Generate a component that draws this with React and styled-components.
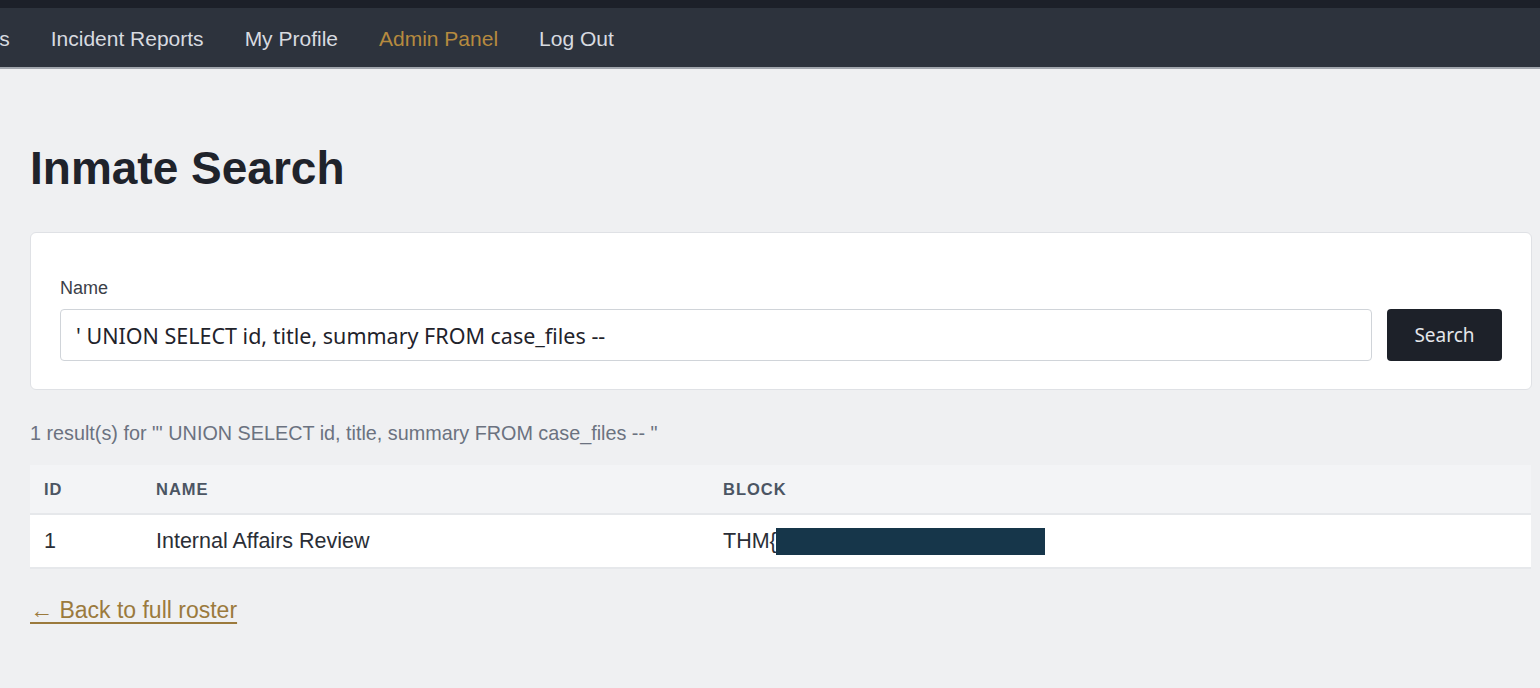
import React from 'react';
import styled, { createGlobalStyle } from 'styled-components';

const GlobalStyle = createGlobalStyle`
  html, body {
    margin: 0;
    padding: 0;
    background: #eff0f2;
    font-family: "Liberation Sans", Arial, sans-serif;
    overflow: hidden;
  }
`;

const navItems = [
  { label: 'Inmates' },
  { label: 'Incident Reports' },
  { label: 'My Profile' },
  { label: 'Admin Panel', active: true },
  { label: 'Log Out' },
];

const query = "' UNION SELECT id, title, summary FROM case_files --";

const App = () => {
  return (
    <>
      <GlobalStyle />
      <TopStrip />
      <NavBar>
        <NavList>
          {navItems.map((item) => (
            <NavLink key={item.label} $active={item.active}>{item.label}</NavLink>
          ))}
        </NavList>
      </NavBar>
      <Main>
        <Title>Inmate Search</Title>
        <SearchCard>
          <Label>Name</Label>
          <SearchRow>
            <SearchInput defaultValue={query} />
            <SearchButton>Search</SearchButton>
          </SearchRow>
        </SearchCard>
        <ResultCount>1 result(s) for "{query} "</ResultCount>
        <Table>
          <colgroup>
            <col style={{ width: '112px' }} />
            <col style={{ width: '567px' }} />
            <col />
          </colgroup>
          <thead>
            <tr>
              <Th>ID</Th>
              <Th>Name</Th>
              <Th>Block</Th>
            </tr>
          </thead>
          <tbody>
            <tr>
              <Td>1</Td>
              <Td>Internal Affairs Review</Td>
              <Td>THM{'{'}<Redacted /></Td>
            </tr>
          </tbody>
        </Table>
        <BackLink href="#">← Back to full roster</BackLink>
      </Main>
    </>
  );
};

const TopStrip = styled.div`
  height: 8px;
  background: #1c2029;
`;

const NavBar = styled.nav`
  height: 59px;
  background: #2d333d;
  border-bottom: 2px solid #a2a7ae;
  display: flex;
  align-items: center;
  overflow: hidden;
`;

const NavList = styled.div`
  display: flex;
  align-items: center;
  gap: 41px;
  margin-left: -65px;
  padding-top: 2px;
`;

const NavLink = styled.a`
  font-size: 21px;
  color: ${(p) => (p.$active ? '#b68a3f' : '#d8dbe0')};
  text-decoration: none;
  white-space: nowrap;
  cursor: pointer;
`;

const Main = styled.main`
  padding: 73px 8px 40px 30px;
`;

const Title = styled.h1`
  margin: 0 0 38px;
  font-size: 46px;
  font-weight: 700;
  color: #1f232b;
  line-height: 52px;
`;

const SearchCard = styled.div`
  background: #ffffff;
  border: 1px solid #dfe1e5;
  border-radius: 6px;
  padding: 45px 29px 28px;
`;

const Label = styled.label`
  display: block;
  font-size: 18px;
  color: #3b4048;
  margin-bottom: 11px;
  line-height: 20px;
`;

const SearchRow = styled.div`
  display: flex;
  gap: 15px;
  align-items: stretch;
`;

const SearchInput = styled.input`
  flex: 1;
  height: 52px;
  box-sizing: border-box;
  border: 1px solid #d0d4d9;
  border-radius: 4px;
  padding: 0 15px;
  font-family: "Noto Sans", "Open Sans", sans-serif;
  font-size: 21.5px;
  color: #1f232b;
  outline: none;
`;

const SearchButton = styled.button`
  width: 115px;
  height: 52px;
  background: #1d2129;
  color: #e4e6ea;
  border: none;
  border-radius: 4px;
  font-family: "Noto Sans", "Open Sans", sans-serif;
  font-size: 19px;
  cursor: pointer;
`;

const ResultCount = styled.p`
  margin: 31px 0 20px;
  font-size: 19.8px;
  color: #6b7280;
  line-height: 24px;
`;

const Table = styled.table`
  width: calc(100% - 1px);
  border-collapse: collapse;
  table-layout: fixed;
`;

const Th = styled.th`
  background: #f3f4f6;
  height: 48px;
  padding: 0 14px;
  text-align: left;
  font-size: 16.5px;
  font-weight: 700;
  text-transform: uppercase;
  letter-spacing: 1px;
  color: #4b5563;
  border-bottom: 2px solid #e6e8eb;
`;

const Td = styled.td`
  background: #ffffff;
  height: 52px;
  padding: 0 14px;
  font-size: 21.5px;
  color: #2a2e36;
  border-bottom: 2px solid #e6e8eb;
  white-space: nowrap;
`;

const Redacted = styled.span`
  display: inline-block;
  width: 269px;
  height: 27px;
  background: #16364a;
  vertical-align: -7px;
  margin-left: -1px;
`;

const BackLink = styled.a`
  display: inline-block;
  margin-top: 28px;
  font-size: 23px;
  color: #9b7a3d;
  text-decoration: underline;
  text-underline-offset: 4px;
`;

export default App;
